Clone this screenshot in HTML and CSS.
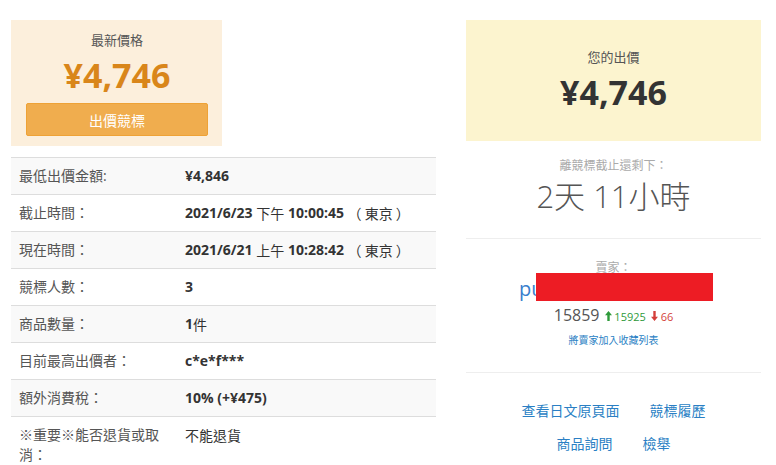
FILE: index.html
```html
<!DOCTYPE html>
<html lang="zh-Hant">
<head>
	<meta charset="UTF-8">
	<title>商品競標</title>
	<link rel="stylesheet" href="styles.css">
</head>
<body>
	<div class="page">
		<div class="col-main">
			<div class="latest">
				<div class="latest-label">最新價格</div>
				<div class="latest-price">¥4,746</div>
				<button class="btn-bid">出價競標</button>
			</div>

			<table class="info">
				<tr>
					<td class="k">最低出價金額:</td>
					<td class="v">¥4,846</td>
				</tr>
				<tr>
					<td class="k">截止時間：</td>
					<td class="v">2021/6/23 <span class="n">下午</span> 10:00:45 <span class="n">（ 東京 ）</span></td>
				</tr>
				<tr>
					<td class="k">現在時間：</td>
					<td class="v">2021/6/21 <span class="n">上午</span> 10:28:42 <span class="n">（ 東京 ）</span></td>
				</tr>
				<tr>
					<td class="k">競標人數：</td>
					<td class="v">3</td>
				</tr>
				<tr>
					<td class="k">商品數量：</td>
					<td class="v">1<span class="n">件</span></td>
				</tr>
				<tr>
					<td class="k">目前最高出價者：</td>
					<td class="v">c*e*f***</td>
				</tr>
				<tr>
					<td class="k">額外消費稅：</td>
					<td class="v">10% (+¥475)</td>
				</tr>
				<tr>
					<td class="k">※重要※能否退貨或取消：</td>
					<td class="v"><span class="n">不能退貨</span></td>
				</tr>
			</table>
		</div>

		<div class="col-side">
			<div class="mybid">
				<div class="mybid-label">您的出價</div>
				<div class="mybid-price">¥4,746</div>
			</div>

			<div class="countdown">
				<div class="muted">離競標截止還剩下：</div>
				<div class="remain">2天 11小時</div>
			</div>

			<div class="seller">
				<div class="muted">賣家：</div>
				<div class="seller-name"><span class="name">pu<span class="redact"></span></span></div>
				<div class="rating">
					<span class="score">15859</span>
					<span class="good">
						<svg width="7" height="10" viewBox="0 0 7 10"><path d="M3.5 0 7 4.2H4.7V10H2.3V4.2H0z" fill="#2e9a3a"/></svg>
						15925
					</span>
					<span class="bad">
						<svg width="7" height="10" viewBox="0 0 7 10"><path d="M3.5 10 7 5.8H4.7V0H2.3V5.8H0z" fill="#d43f3a"/></svg>
						66
					</span>
				</div>
				<a class="fav" href="#">將賣家加入收藏列表</a>
			</div>

			<div class="links">
				<div class="link-row">
					<a href="#">查看日文原頁面</a>
					<a href="#">競標履歷</a>
				</div>
				<div class="link-row">
					<a href="#">商品詢問</a>
					<a href="#">檢舉</a>
				</div>
			</div>
		</div>
	</div>
</body>
</html>
```

FILE: styles.css
```css
html, body {
	margin: 0;
	padding: 0;
	background: #fff;
}

body {
	font-family: "Open Sans", "Noto Sans CJK TC", sans-serif;
	font-size: 14px;
	line-height: 20px;
	color: #333;
}

a {
	color: #2a7fc4;
	text-decoration: none;
}

.page {
	display: flex;
	gap: 30px;
	padding: 20px 15px 0 11px;
}

.col-main {
	width: 425px;
}
.col-side {
	width: 295px;
}

/* latest price box */
.latest {
	width: 211px;
	box-sizing: border-box;
	padding: 10px 14px 10px 15px;
	background: #fcefdc;
	text-align: center;
}
.latest-label {
	font-size: 13px;
	color: #555;
}
.latest-price {
	margin-top: 5px;
	font-size: 34px;
	line-height: 40px;
	font-weight: 700;
	color: #d9861a;
}
.btn-bid {
	display: block;
	width: 100%;
	height: 33px;
	margin-top: 8px;
	padding: 0;
	border: 1px solid #eea236;
	border-radius: 2px;
	background: #f0ad4e;
	color: #fff;
	font-family: inherit;
	font-size: 14px;
}

/* info table */
.info {
	width: 100%;
	margin-top: 11px;
	border-collapse: collapse;
}
.info td {
	padding: 8px;
	border-top: 1px solid #ddd;
	vertical-align: top;
}
.info tr:nth-child(odd) td {
	background: #f9f9f9;
}
.info td.k {
	width: 150px;
	color: #555;
}
.info td.v {
	font-weight: 700;
	color: #333;
}
.info td .n {
	font-family: "Noto Sans CJK TC", sans-serif;
	font-weight: 400;
	vertical-align: top;
}

/* side */
.mybid {
	padding: 27px 0 29px;
	background: #fcf4cf;
	text-align: center;
}
.mybid-label {
	font-size: 13px;
	color: #555;
}
.mybid-price {
	margin-top: 5px;
	font-size: 34px;
	line-height: 40px;
	font-weight: 700;
	color: #333;
}

.muted {
	font-size: 12px;
	line-height: 17px;
	color: #aaa;
}

.countdown {
	padding: 16px 0 22px;
	text-align: center;
}
.remain {
	margin-top: 2px;
	font-size: 31px;
	line-height: 40px;
	font-weight: 300;
	color: #555;
}

.seller {
	padding: 20px 0 25px;
	border-top: 1px solid #eee;
	border-bottom: 1px solid #eee;
	text-align: center;
}
.seller-name {
	font-size: 20px;
	line-height: 26px;
	color: #3a7fcd;
}
.seller-name .name {
	position: relative;
	display: inline-block;
	width: 194px;
	margin-left: 5px;
	text-align: left;
}
.redact {
	position: absolute;
	left: 17px;
	top: -3px;
	width: 177px;
	height: 28px;
	background: #ed1c24;
}
.rating {
	margin-top: 3px;
	display: flex;
	justify-content: center;
	align-items: baseline;
	gap: 5px;
}
.score {
	font-size: 16px;
	color: #555;
}
.good, .bad {
	font-size: 11px;
}
.good {
	color: #2e9a3a;
}
.bad {
	color: #d43f3a;
}
.fav {
	display: block;
	margin-top: 6px;
	font-size: 10px;
	line-height: 14px;
}

.links {
	padding-top: 28px;
}
.link-row {
	display: flex;
	justify-content: center;
	gap: 30px;
	margin-bottom: 13px;
}
```
